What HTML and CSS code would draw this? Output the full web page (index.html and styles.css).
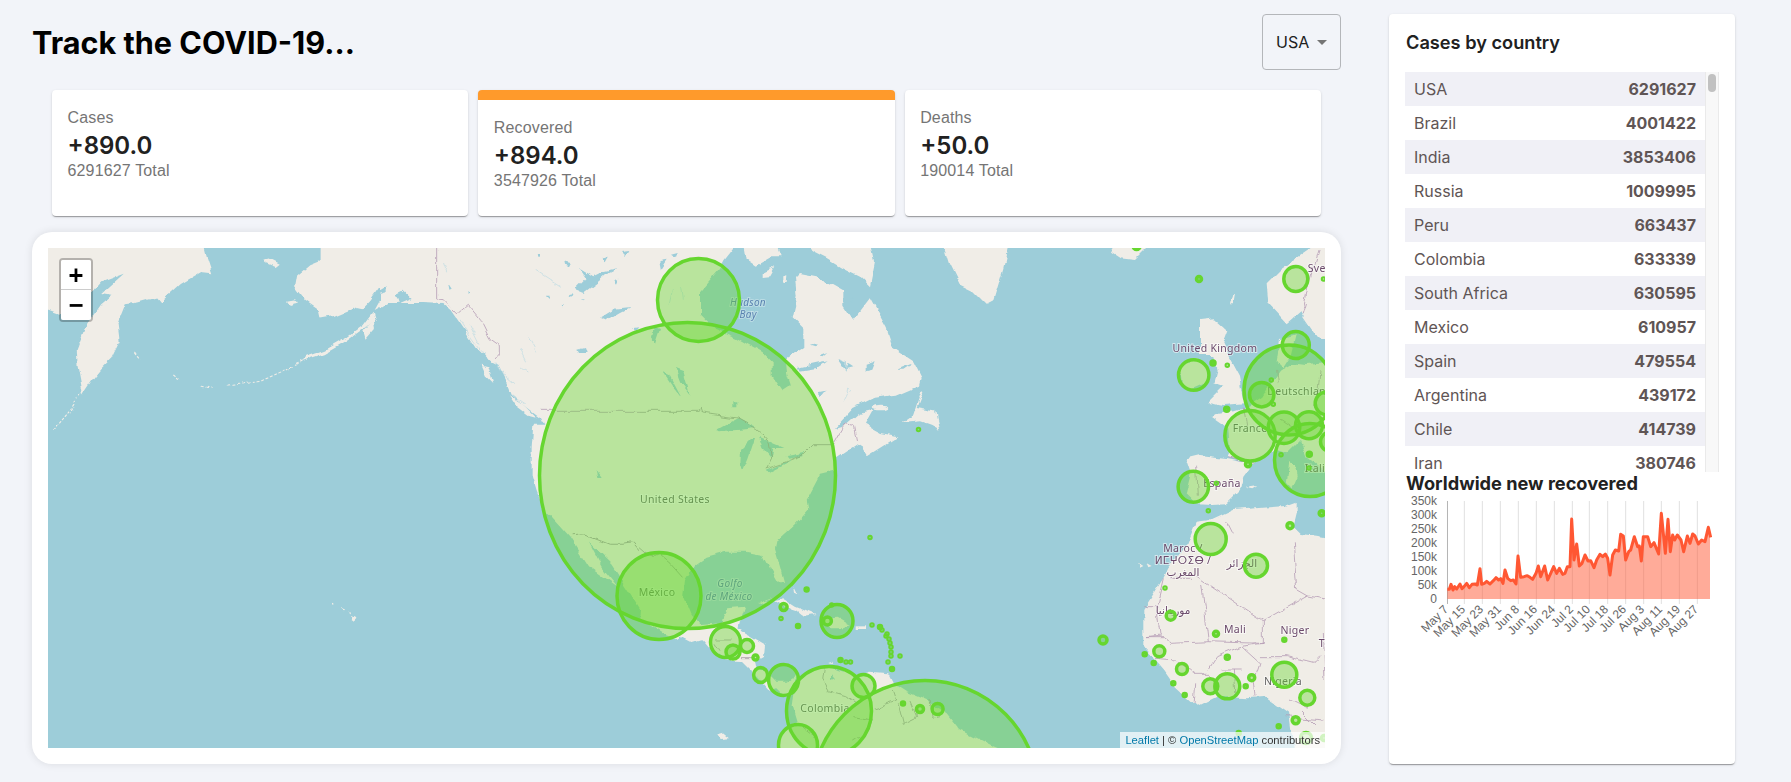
FILE: index.html
```html
<!DOCTYPE html>
<html lang="en">
<head>
<meta charset="utf-8">
<title>Track the COVID-19...</title>
<link rel="stylesheet" href="styles.css">
</head>
<body>
<div class="page">
  <main class="main">
    <header class="top">
      <h1 class="title">Track the COVID-19...</h1>
      <div class="select"><span>USA</span><i class="caret"></i></div>
    </header>
    <section class="stats">
      <article class="stat">
        <div class="stat-label">Cases</div>
        <div class="stat-value">+890.0</div>
        <div class="stat-total">6291627 Total</div>
      </article>
      <article class="stat stat-active">
        <div class="stat-label">Recovered</div>
        <div class="stat-value">+894.0</div>
        <div class="stat-total">3547926 Total</div>
      </article>
      <article class="stat">
        <div class="stat-label">Deaths</div>
        <div class="stat-value">+50.0</div>
        <div class="stat-total">190014 Total</div>
      </article>
    </section>
    <section class="map-card">
      <div class="map">
        <svg class="map-svg" viewBox="48 248 1277 500" width="1277" height="500">
          <defs>
            <filter id="rough" filterUnits="userSpaceOnUse" x="20" y="220" width="1340" height="560">
              <feTurbulence type="fractalNoise" baseFrequency=".06" numOctaves="4" seed="7" result="n"/>
              <feDisplacementMap in="SourceGraphic" in2="n" scale="7" xChannelSelector="R" yChannelSelector="G"/>
              <feGaussianBlur stdDeviation=".35"/>
            </filter>
          </defs>
          <rect class="water" x="48" y="248" width="1277" height="500"/>
          <g filter="url(#rough)">
          <!-- Siberia, Alaska, Pacific -->
          <g transform="translate(40 240) scale(.40816 .33807)">
            <path class="land" d="M0,-20L395,-20 410,55 422,98 395,95 345,130 295,185 285,170 240,185 210,190 190,250 195,300 175,350 150,380 130,410 105,455 92,370 90,325 110,260 150,190 175,165 150,160 205,100 150,125 125,160 100,200 45,218 0,198Z"/>
            <path class="land" d="M690,-20L690,60 660,75 630,105 625,140 650,180 680,205 685,232 720,225 770,200 790,205 810,180 830,145 850,145 820,210 880,170 940,180 1000,185 1000,-20Z"/>
            <path class="land" d="M815,215L790,255 750,290 700,325 650,345 640,358 700,335 750,300 790,265 820,235Z"/>
            <path class="land" d="M605,180L625,175 632,185 612,192Z"/>
            <path class="land" d="M545,58L560,55 585,70 575,80 550,68Z"/>
            <path class="land" d="M790,270L815,235 818,260 795,292Z"/>
            <path class="isle" d="M640,358L600,385 540,418 500,425 455,433M395,430L420,435M325,400L340,415M232,335L242,350M100,455L70,510 35,560"/>
            <path class="land" d="M1225,740L1240,800 1300,880 1345,965 1415,1025 1375,965 1345,895 1400,960 1470,1090 1468,1120 1535,1170 1568,1180 1568,700 1225,700Z"/>
            <path class="land" d="M710,1075L716,1073 716,1080ZM735,1085L745,1090 740,1095ZM755,1095L762,1103 760,1108ZM765,1112L778,1120 770,1130 764,1125Z"/>
          </g>
          <!-- West Canada -->
          <g transform="translate(380 248) scale(.33333)">
            <path class="land" d="M0,183L25,165 60,165 130,165 190,168 215,190 250,240 290,300 325,335 355,350 380,400 395,440 440,480 480,510 490,530 460,530 455,600 455,680 470,730 490,780 900,780 900,-30 0,-30Z"/>
            <path class="land" d="M390,445L430,470 470,510 450,505 410,475Z"/>
            <path class="land" d="M305,350L325,355 340,405 320,385Z"/>
            <path class="lake" d="M585,125L620,90 600,60 640,85 670,70 715,60 685,75 650,105 610,135ZM660,210L700,185 750,180 720,195 680,218ZM553,40L575,45 570,55 555,50ZM0,130L20,118 20,135 0,140ZM50,135L70,125 95,150 60,165ZM595,305L615,300 620,315 600,315ZM830,40L860,40 850,70 835,65ZM815,270L830,235 840,240 825,285Z"/>
            <path class="lake" d="M650,668L665,690 655,690ZM880,355L900,360 900,400 880,385ZM500,140L512,140 510,150ZM565,145L578,142 575,150ZM545,170L555,172 548,178ZM600,155L615,153 605,160ZM470,15L480,15 475,25ZM670,30L690,22 680,40ZM720,15L745,12 735,30ZM700,100L715,95 708,110ZM790,130L805,128 795,150ZM760,240L775,238 765,250ZM205,110L215,125 208,128ZM265,125L272,135 266,138Z"/>
            <path class="fjord" d="M240,215L275,270 320,330M270,230L300,290M345,340L375,385 405,410M395,440L440,470M445,265L470,310M420,360L445,375M470,70L540,115M190,40L200,70M420,300L440,340"/>
            <path class="border" d="M170,-30L170,153 190,155 232,200 265,172 300,215 330,275 358,295 358,315 345,330M480,490L900,490"/>
          </g>
          <!-- Mexico border -->
          <g transform="translate(40 240) scale(.40816 .33807)">
            <path class="border-gray" d="M1305,875L1335,872 1395,900 1430,900 1455,895 1480,930 1500,945 1520,930 1540,960 1568,1000"/>
          </g>
          <!-- East Canada & US -->
          <g transform="translate(640 248) scale(.33333)">
            <path class="land" d="M0,-30L305,-30 250,40 240,60 180,130 180,200 220,240 290,270 370,315 395,340 395,385 425,430 455,410 445,380 440,330 490,300 490,240 455,205 470,140 465,90 480,75 530,85 610,130 610,170 640,215 690,150 740,240 760,300 820,340 845,390 840,410 770,440 700,450 640,480 585,540 620,530 660,495 700,485 675,530 720,555 775,565 680,625 665,600 650,590 590,630 585,670 540,680 500,756 500,780 0,780Z"/>
            <path class="land" d="M785,525L820,500 845,425 850,430 830,480 885,490 898,545 870,530 840,520Z"/>
            <ellipse class="land" cx="720" cy="477" rx="25" ry="7"/>
            <path class="land" d="M465,-30L690,-30 705,40 690,115 660,85 610,60 560,30 520,10Z"/>
            <path class="land" d="M310,-30L400,-30 422,25 395,25 350,50 320,30Z"/>
            <path class="land" d="M365,75L400,58 385,85 365,87Z"/>
            <path class="land" d="M430,85L442,82 440,105 430,105Z"/>
            <path class="land" d="M905,-30L1110,-30 1090,60 1060,160 1040,170 1000,130 960,110 930,50Z"/>
            <path class="lake" d="M225,545L290,510 350,540 300,545 240,550ZM300,600L330,570 345,570 325,630 310,665 298,650ZM360,570L430,600 400,600 395,630 370,600ZM380,665L440,640 450,640 390,670ZM440,625L490,615 490,625 445,632ZM105,360L130,370 150,440 120,400ZM280,460L292,460 292,478 280,478ZM70,375L90,385 125,450 100,420ZM640,355L625,345 620,360ZM470,360L560,340 530,360 480,368ZM680,350L710,340 700,365 680,370ZM770,365L820,345 790,365ZM595,330L620,340 620,365ZM510,290L530,285 525,295ZM635,145L640,160 628,155ZM440,295L455,270 450,298ZM540,325L565,315 550,328ZM55,40L80,35 60,65ZM90,20L110,15 105,30ZM535,430L555,425 535,450ZM45,235L60,240 45,285 35,270Z"/>
            <path class="fjord" d="M100,130L90,175M125,120L130,155M620,420L632,430 618,435 620,420M610,460L620,440"/>
            <path class="border-gray" d="M0,490L175,490 180,480 185,495 290,510 350,545 385,575 395,630 380,660 440,640 490,620 520,590 580,590"/>
            <path class="border" d="M580,590L600,555 615,530 640,535 650,585"/>
          </g>
          <!-- Gulf, Central & South America -->
          <g transform="translate(640 500) scale(.33333)">
            <path class="land" d="M0,0L500,0 505,30 470,70 410,125 405,150 420,200 432,245 415,248 390,205 370,165 320,155 255,155 200,170 165,195 135,240 130,285 155,345 180,375 245,370 250,345 262,325 315,320 300,365 295,388 375,435 372,465 345,480 350,505 395,530 410,545 440,545 470,525 460,545 455,575 430,580 415,565 385,570 340,520 300,480 255,478 215,450 185,415 150,425 115,407 80,395 40,375 0,345Z"/>
            <path class="land" d="M460,575L480,545 520,510 560,495 590,510 625,520 640,530 690,515 745,520 760,550 800,575 860,600 920,640 960,690 1050,735 1190,790 410,790 415,720 440,680 470,670 455,620Z"/>
            <path class="land" d="M405,300L430,295 470,320 530,345 495,350 470,330 440,320Z"/>
            <path class="land" d="M355,310L400,293 365,312Z"/>
            <path class="land" d="M540,355L590,350 632,375 610,385 570,385Z"/>
            <path class="land" d="M650,376L678,376 678,384 650,384Z"/>
            <path class="land" d="M463,255L475,280 465,275ZM565,490L580,485 582,492ZM235,700L250,695 270,712 245,714Z"/>
            <path class="lake" d="M570,520L582,535 570,540Z"/>
            <path class="border-gray" d="M0,140L40,175 60,165 90,190 130,235M225,420L275,420M225,430L240,455M300,470L345,470M550,505L545,540 565,575 620,590 650,610M700,625L770,600 760,570M775,610L790,670 830,650 810,600M870,600L880,655 900,650M640,650L700,660 690,690 640,720M490,680L530,710"/>
          </g>
          <!-- Europe -->
          <g transform="translate(1100 240) scale(.33333)">
            <path class="land" d="M110,-20L150,15 105,60 60,55 30,35 60,-20Z"/>
            <path class="land" d="M730,-20L655,-20 635,24 590,55 540,90 500,130 505,190 560,250 600,215 612,235 650,290 730,310Z"/>
            <path class="land" d="M300,240L345,235 385,270 370,310 385,345 420,410 435,490 370,495 325,485 370,440 340,430 350,390 340,345 300,345Z"/>
            <path class="land" d="M240,380L290,360 320,375 325,425 270,450 245,430Z"/>
            <path class="land" d="M540,300L590,285 575,345 550,385 530,365Z"/>
            <path class="land" d="M730,365L620,375 580,370 555,385 540,395 515,430 490,470 445,500 405,510 345,520 335,530 385,565 390,640 385,650 465,668 530,630 560,640 600,600 620,650 730,740Z"/>
            <path class="land" d="M565,665L585,675 590,710 575,745 558,725Z"/>
            <path class="land" d="M260,655L300,645 385,655 460,670 430,710 420,750 380,790 330,792 290,790 260,760 275,700Z"/>
            <path class="land" d="M395,170L405,160 400,190 390,190ZM440,740L475,735 460,745Z"/>
            <path class="border" d="M620,190L610,225M655,30L625,130 610,210M290,680L295,770M430,500L440,560M530,390L535,430M385,650L460,670M660,390L650,500M540,540L600,580"/>
          </g>
          <!-- Africa -->
          <g transform="translate(1100 500) scale(.33333)">
            <path class="land" d="M290,65L330,60 395,30 470,25 555,18 590,5 590,40 580,80 605,105 650,110 730,125 730,790 590,790 570,640 500,590 440,595 350,590 290,620 225,560 190,510 130,440 130,330 190,235 205,205 265,130Z"/>
            <path class="land" d="M115,185L130,195 120,200ZM140,190L155,198 145,202Z"/>
            <path class="border" d="M130,320L170,320 190,235M170,320L180,405 140,410M305,255L325,425 215,430 190,410 140,410M270,215L470,350 490,362 625,285 680,295M490,362L490,430 325,425M580,130L590,265 625,285M210,235L270,235M400,100L380,60M490,430L420,440 350,470 325,510M165,475L230,480 280,520 330,520M365,510L425,510M480,470L560,470 640,490 660,470M425,440L480,490 460,550 465,590M290,550L285,615M400,510L405,590M560,650L670,660M570,600L620,625M670,400L675,540M600,630L650,680"/>
          </g>
          </g>
          <!-- Map labels -->
          <g class="labels">
            <text class="lb lb-water" x="748" y="306">Hudson</text>
            <text class="lb lb-water" x="748" y="318">Bay</text>
            <text class="lb" x="675" y="503">United States</text>
            <text class="lb" x="657" y="596">México</text>
            <text class="lb lb-water lb-gulf" x="730" y="587">Golfo</text>
            <text class="lb lb-water lb-gulf" x="729" y="600">de México</text>
            <text class="lb" x="825" y="712">Colombia</text>
            <text class="lb lb-pur" x="1215" y="352">United Kingdom</text>
            <text class="lb lb-pur" x="1222" y="487">España</text>
            <text class="lb" x="1250" y="432">France</text>
            <text class="lb" x="1300" y="395">Deutschland</text>
            <text class="lb" x="1318" y="472">Italia</text>
            <text class="lb lb-pur" x="1327" y="272">Sverige</text>
            <text class="lb lb-pur" x="1183" y="552">Maroc /</text>
            <text class="lb lb-pur" x="1183" y="564">ⵍⵎⵖⵔⵉⴱ /</text>
            <text class="lb lb-pur" x="1183" y="576">المغرب</text>
            <text class="lb lb-pur" x="1242" y="567">الجزائر</text>
            <text class="lb lb-pur" x="1173" y="614">موريتانيا</text>
            <text class="lb lb-pur" x="1235" y="633">Mali</text>
            <text class="lb lb-pur" x="1295" y="634">Niger</text>
            <text class="lb lb-pur" x="1334" y="647">Tchad</text>
            <text class="lb" x="1283" y="685">Nigeria</text>
          </g>
          <!-- Circles -->
          <g class="circles">
            <ellipse cx="687.5" cy="475.5" rx="148" ry="153"/>
            <ellipse cx="659" cy="596" rx="42" ry="43.5"/>
            <ellipse cx="698.5" cy="300" rx="41" ry="41.5"/>
            <ellipse cx="925" cy="796" rx="114" ry="115.500"/>
            <ellipse cx="829" cy="711" rx="42.5" ry="44.5"/>
            <ellipse cx="798" cy="745" rx="19.5" ry="20.5"/>
            <ellipse cx="863.5" cy="686" rx="11.5" ry="11.5"/>
            <ellipse cx="725.5" cy="642" rx="15" ry="15.5"/>
            <ellipse cx="733" cy="652" rx="7" ry="7"/>
            <ellipse cx="747" cy="646" rx="6.5" ry="6.5"/>
            <ellipse cx="755.5" cy="657.5" rx="2.5" ry="2.5"/>
            <ellipse cx="760.6" cy="675" rx="7" ry="7.5"/>
            <ellipse cx="783.6" cy="680" rx="15" ry="15.5"/>
            <ellipse cx="783.6" cy="607" rx="3.5" ry="3.5"/>
            <ellipse cx="806.6" cy="589.6" rx="1.5" ry="1.5"/>
            <ellipse cx="781" cy="618.6" rx="1" ry="1"/>
            <ellipse cx="798" cy="626" rx="1.5" ry="1.5"/>
            <ellipse cx="837" cy="621" rx="16" ry="16.5"/>
            <ellipse cx="827.4" cy="621" rx="4" ry="4"/>
            <ellipse cx="831.7" cy="605" rx="1" ry="1"/>
            <ellipse cx="872" cy="625" rx="1" ry="1"/>
            <ellipse cx="880" cy="627" rx="1.5" ry="1.5"/>
            <ellipse cx="882" cy="630" rx="1" ry="1"/>
            <ellipse cx="887" cy="634" rx="1" ry="1"/>
            <ellipse cx="886" cy="636" rx="1" ry="1"/>
            <ellipse cx="889" cy="639" rx="1" ry="1"/>
            <ellipse cx="890" cy="643" rx="1" ry="1"/>
            <ellipse cx="891" cy="647" rx="1" ry="1"/>
            <ellipse cx="891" cy="652" rx="1" ry="1"/>
            <ellipse cx="891" cy="656" rx="1" ry="1"/>
            <ellipse cx="900" cy="656" rx="1" ry="1"/>
            <ellipse cx="888" cy="662" rx="1" ry="1"/>
            <ellipse cx="892" cy="669" rx="1.5" ry="1.5"/>
            <ellipse cx="840.5" cy="660" rx="1.5" ry="1.5"/>
            <ellipse cx="846" cy="662" rx="1" ry="1"/>
            <ellipse cx="850.5" cy="662" rx="1" ry="1"/>
            <ellipse cx="903" cy="703.5" rx="1.5" ry="1.5"/>
            <ellipse cx="920" cy="709" rx="3.5" ry="3.5"/>
            <ellipse cx="937.6" cy="709" rx="5.5" ry="5.5"/>
            <ellipse cx="918.5" cy="429.6" rx="1" ry="1"/>
            <ellipse cx="870" cy="537.5" rx="1" ry="1"/>
            <ellipse cx="1103" cy="640" rx="4" ry="4"/>
            <ellipse cx="1136.6" cy="246" rx="3.5" ry="3.5"/>
            <ellipse cx="1199" cy="279" rx="2.5" ry="2.5"/>
            <ellipse cx="1295.8" cy="279" rx="12" ry="12.5"/>
            <ellipse cx="1323.5" cy="279" rx="1" ry="1"/>
            <ellipse cx="1295.8" cy="345" rx="13.5" ry="13.5"/>
            <ellipse cx="1193.7" cy="375" rx="15.2" ry="15.2"/>
            <ellipse cx="1213" cy="363" rx="2" ry="2"/>
            <ellipse cx="1227.3" cy="365.3" rx="1" ry="1"/>
            <ellipse cx="1226.7" cy="409.3" rx="2" ry="2"/>
            <ellipse cx="1271.3" cy="380" rx="1" ry="1"/>
            <ellipse cx="1273.3" cy="404.3" rx="1" ry="1"/>
            <ellipse cx="1289" cy="390" rx="45" ry="45"/>
            <ellipse cx="1261.7" cy="394.7" rx="12.2" ry="12.2"/>
            <ellipse cx="1250" cy="435.7" rx="25.2" ry="25.2"/>
            <ellipse cx="1284" cy="427.7" rx="15.8" ry="15.8"/>
            <ellipse cx="1309" cy="425.3" rx="13.5" ry="13.5"/>
            <ellipse cx="1310" cy="460" rx="35.5" ry="36.5"/>
            <ellipse cx="1326.7" cy="403.3" rx="11.5" ry="11.5"/>
            <ellipse cx="1330" cy="441.7" rx="9.5" ry="9.5"/>
            <ellipse cx="1281" cy="454.7" rx="1" ry="1"/>
            <ellipse cx="1309.3" cy="454.3" rx="2" ry="2"/>
            <ellipse cx="1309" cy="468" rx="1" ry="1"/>
            <ellipse cx="1248" cy="464.3" rx="2.5" ry="2.5"/>
            <ellipse cx="1193.3" cy="486.7" rx="15.2" ry="15.5"/>
            <ellipse cx="1216.3" cy="483.3" rx="1" ry="1"/>
            <ellipse cx="1208.3" cy="510.7" rx="1" ry="1"/>
            <ellipse cx="1321.7" cy="513.3" rx="2.5" ry="2.5"/>
            <ellipse cx="1290" cy="525.7" rx="3" ry="3"/>
            <ellipse cx="1210.7" cy="539" rx="15.5" ry="15.5"/>
            <ellipse cx="1256" cy="565.7" rx="11.5" ry="11.5"/>
            <ellipse cx="1165" cy="588" rx="1" ry="1"/>
            <ellipse cx="1170.7" cy="615.7" rx="4.5" ry="4.5"/>
            <ellipse cx="1216" cy="633.7" rx="2.5" ry="2.5"/>
            <ellipse cx="1284.3" cy="639.7" rx="1.5" ry="1.5"/>
            <ellipse cx="1159.3" cy="651.3" rx="5.5" ry="5.5"/>
            <ellipse cx="1144.7" cy="654.3" rx="1.5" ry="1.5"/>
            <ellipse cx="1153.7" cy="663" rx="1.5" ry="1.5"/>
            <ellipse cx="1227.3" cy="657.3" rx="2" ry="2"/>
            <ellipse cx="1182" cy="669" rx="5.5" ry="5.5"/>
            <ellipse cx="1251.7" cy="677.7" rx="3" ry="3"/>
            <ellipse cx="1284.3" cy="674.7" rx="12.5" ry="12.5"/>
            <ellipse cx="1173.3" cy="683.3" rx="1.5" ry="1.5"/>
            <ellipse cx="1210.3" cy="686.3" rx="7.5" ry="7.5"/>
            <ellipse cx="1227.3" cy="686.3" rx="12.5" ry="12.5"/>
            <ellipse cx="1245.7" cy="686.3" rx="1.5" ry="1.5"/>
            <ellipse cx="1184.7" cy="695" rx="1.5" ry="1.5"/>
            <ellipse cx="1307.3" cy="697.7" rx="7.5" ry="7.5"/>
            <ellipse cx="1295.7" cy="720.3" rx="3.5" ry="3.5"/>
            <ellipse cx="1278.7" cy="726.3" rx="1.5" ry="1.5"/>
            <ellipse cx="1238.7" cy="733" rx="1.5" ry="1.5"/>
            <ellipse cx="1306" cy="738" rx="5.5" ry="5.5"/>
            <ellipse cx="1324" cy="738" rx="2.5" ry="2.5"/>
          </g>
        </svg>
        <div class="zoom">
          <div class="zoom-btn">+</div>
          <div class="zoom-btn">−</div>
        </div>
        <div class="attrib"><a class="attrib-link">Leaflet</a> | © <a class="attrib-link">OpenStreetMap</a> contributors</div>
      </div>
    </section>
  </main>
  <aside class="side">
    <h2 class="side-title">Cases by country</h2>
    <div class="list-wrap">
      <ul class="list">
        <li class="row"><span>USA</span><b>6291627</b></li>
        <li class="row"><span>Brazil</span><b>4001422</b></li>
        <li class="row"><span>India</span><b>3853406</b></li>
        <li class="row"><span>Russia</span><b>1009995</b></li>
        <li class="row"><span>Peru</span><b>663437</b></li>
        <li class="row"><span>Colombia</span><b>633339</b></li>
        <li class="row"><span>South Africa</span><b>630595</b></li>
        <li class="row"><span>Mexico</span><b>610957</b></li>
        <li class="row"><span>Spain</span><b>479554</b></li>
        <li class="row"><span>Argentina</span><b>439172</b></li>
        <li class="row"><span>Chile</span><b>414739</b></li>
        <li class="row"><span>Iran</span><b>380746</b></li>
      </ul>
      <div class="track"><div class="thumb"></div></div>
    </div>
    <h3 class="chart-title">Worldwide new recovered</h3>
    <svg class="chart" viewBox="1390 494 340 170" width="340" height="170">
      <g class="ylab">
        <text x="1437" y="505">350k</text>
        <text x="1437" y="519">300k</text>
        <text x="1437" y="533">250k</text>
        <text x="1437" y="547">200k</text>
        <text x="1437" y="561">150k</text>
        <text x="1437" y="575">100k</text>
        <text x="1437" y="589">50k</text>
        <text x="1437" y="603">0</text>
      </g>
      <g transform="translate(1380 400) scale(.33333)">
        <path class="grid" d="M253,303V612M307,303V612M361,303V612M415,303V612M469,303V612M523,303V612M577,303V612M628,303V612M683,303V612M737,303V612M791,303V612M844,303V612M898,303V612M952,303V612"/>
        <path class="axis" d="M202.500,303V612"/>
        <path class="area" d="M202,597L202,568 208,568 213,553 219,570 224,560 230,567 236,558 240,552 246,566 252,560 260,550 268,563 276,553 285,552 292,555 300,506 305,553 313,550 320,544 330,552 340,542 348,533 356,540 362,536 369,550 375,510 383,535 392,542 400,540 408,552 414,468 422,532 432,530 442,527 450,532 458,538 468,520 475,498 482,530 494,498 503,540 512,520 521,500 530,520 538,505 548,523 555,520 562,500 570,500 575,357 582,480 590,432 598,498 606,490 615,465 624,483 632,482 642,503 650,480 660,463 668,470 676,462 683,475 690,525 698,465 706,450 716,453 722,403 730,408 737,480 746,455 752,450 763,410 773,440 778,438 784,483 790,410 803,410 812,440 822,428 836,462 844,340 856,460 864,358 871,455 878,405 884,420 892,405 903,420 911,455 922,408 930,430 938,402 945,408 955,432 965,420 975,425 985,382 990,410 990,597Z"/>
        <path class="line" d="M202,568L208,568 213,553 219,570 224,560 230,567 236,558 240,552 246,566 252,560 260,550 268,563 276,553 285,552 292,555 300,506 305,553 313,550 320,544 330,552 340,542 348,533 356,540 362,536 369,550 375,510 383,535 392,542 400,540 408,552 414,468 422,532 432,530 442,527 450,532 458,538 468,520 475,498 482,530 494,498 503,540 512,520 521,500 530,520 538,505 548,523 555,520 562,500 570,500 575,357 582,480 590,432 598,498 606,490 615,465 624,483 632,482 642,503 650,480 660,463 668,470 676,462 683,475 690,525 698,465 706,450 716,453 722,403 730,408 737,480 746,455 752,450 763,410 773,440 778,438 784,483 790,410 803,410 812,440 822,428 836,462 844,340 856,460 864,358 871,455 878,405 884,420 892,405 903,420 911,455 922,408 930,430 938,402 945,408 955,432 965,420 975,425 985,382 992,412"/>
      </g>
      <g class="xlab">
        <text transform="translate(1449 610) rotate(-45)">May 7</text>
        <text transform="translate(1466 610) rotate(-45)">May 15</text>
        <text transform="translate(1484 610) rotate(-45)">May 23</text>
        <text transform="translate(1502 610) rotate(-45)">May 31</text>
        <text transform="translate(1520 610) rotate(-45)">Jun 8</text>
        <text transform="translate(1538 610) rotate(-45)">Jun 16</text>
        <text transform="translate(1556 610) rotate(-45)">Jun 24</text>
        <text transform="translate(1574 610) rotate(-45)">Jul 2</text>
        <text transform="translate(1591 610) rotate(-45)">Jul 10</text>
        <text transform="translate(1609 610) rotate(-45)">Jul 18</text>
        <text transform="translate(1627 610) rotate(-45)">Jul 26</text>
        <text transform="translate(1645 610) rotate(-45)">Aug 3</text>
        <text transform="translate(1663 610) rotate(-45)">Aug 11</text>
        <text transform="translate(1681 610) rotate(-45)">Aug 19</text>
        <text transform="translate(1699 610) rotate(-45)">Aug 27</text>
      </g>
    </svg>
  </aside>
</div>
</body>
</html>
```
FILE: styles.css
```css
* { box-sizing: border-box; }
html, body { margin: 0; padding: 0; }
body {
  background: #f2f4f9;
  font-family: Inter, "Liberation Sans", sans-serif;
  color: #212121;
  height: 782px;
  overflow: hidden;
}
.page {
  display: flex;
  gap: 48px;
  padding: 14px 56px 18px 32px;
  height: 782px;
}
.main {
  width: 1309px;
  display: flex;
  flex-direction: column;
}
.top {
  display: flex;
  justify-content: space-between;
  align-items: center;
  height: 56px;
}
.title {
  margin: 2px 0 0;
  font-size: 30.6px;
  font-weight: 700;
  color: #000;
  line-height: 56px;
}
.select {
  width: 79px;
  height: 56px;
  border: 1px solid #b4b6ba;
  border-radius: 4px;
  display: flex;
  align-items: center;
  padding-left: 13px;
  font-size: 16px;
  color: #212121;
  gap: 8px;
}
.caret {
  width: 0;
  height: 0;
  border-left: 5px solid transparent;
  border-right: 5px solid transparent;
  border-top: 5px solid #757575;
  margin-top: 1px;
}
.stats {
  display: flex;
  gap: 10px;
  margin: 20px 20px 0 20px;
  height: 126px;
}
.stat {
  flex: 1;
  background: #fff;
  border-radius: 4px;
  padding: 16px 16px 0 15.500px;
  box-shadow: 0 2px 1px -1px rgba(0,0,0,.2), 0 1px 1px 0 rgba(0,0,0,.14), 0 1px 3px 0 rgba(0,0,0,.12);
}
.stat-active {
  border-top: 10px solid #ff9a2b;
}
.stat-label, .stat-total {
  font-family: "Liberation Sans", Arial, sans-serif;
  font-size: 16px;
  line-height: 24px;
  letter-spacing: .15px;
  color: #757575;
}
.stat-value {
  font-size: 24px;
  font-weight: 600;
  line-height: 28px;
  margin-top: 2px;
  color: #212121;
}
.stat-total { margin-top: -1px; }
.map-card {
  margin-top: 16px;
  height: 532px;
  background: #fff;
  border-radius: 20px;
  padding: 16px;
  box-shadow: 0 0 8px rgba(0,0,0,.1);
}
.map {
  position: relative;
  width: 1277px;
  height: 500px;
  overflow: hidden;
}
.map-svg { display: block; }
.water { fill: #9dcdd9; }
.land { fill: #f0ede7; }
.lake { fill: #9dcdd9; }
.isle { fill: none; stroke: #f0ede7; stroke-width: 3; stroke-linecap: round; stroke-dasharray: 5 7; }
.fjord { fill: none; stroke: #bcdbe3; stroke-width: 2; }
.border { fill: none; stroke: #b59cb5; stroke-width: 2.4; }
.border-gray { fill: none; stroke: #a49aa3; stroke-width: 2.4; }
.circles ellipse {
  fill: #66d62f;
  fill-opacity: .4;
  stroke: #66d62f;
  stroke-width: 3.5;
}
.lb {
  font-family: "Noto Sans", "DejaVu Sans", sans-serif;
  font-size: 10.5px;
  letter-spacing: .3px;
  text-anchor: middle;
  fill: #666;
  stroke: rgba(255,255,255,.55);
  stroke-width: 2px;
  paint-order: stroke;
}
.lb-pur { fill: #6b4a6b; }
.lb-water { fill: #5a83b0; font-style: italic; font-size: 10px; stroke: rgba(255,255,255,.3); }
.lb-gulf { fill: #5a83b0; }
.zoom {
  position: absolute;
  left: 11px;
  top: 10px;
  width: 34px;
  border: 2px solid rgba(0,0,0,.25);
  border-radius: 4px;
  background-clip: padding-box;
}
.zoom-btn {
  width: 30px;
  height: 30px;
  background: #fff;
  text-align: center;
  font: 700 24px/30px "DejaVu Sans Mono", "Liberation Mono", monospace;
  color: #000;
}
.zoom-btn:first-child {
  border-bottom: 1px solid #ccc;
  border-radius: 2px 2px 0 0;
}
.zoom-btn:last-child { border-radius: 0 0 2px 2px; }
.attrib {
  position: absolute;
  right: 0;
  bottom: 0;
  height: 16px;
  padding: 0 5px;
  background: rgba(255,255,255,.7);
  font: 11.2px/16px "Liberation Sans", Arial, sans-serif;
  color: #333;
}
.attrib-link { color: #0078a8; }
.side {
  width: 346px;
  height: 750px;
  background: #fff;
  border-radius: 4px;
  padding: 0 16px;
  box-shadow: 0 2px 1px -1px rgba(0,0,0,.2), 0 1px 1px 0 rgba(0,0,0,.14), 0 1px 3px 0 rgba(0,0,0,.12);
}
.side-title {
  margin: 0;
  padding: 17px 0 0 1px;
  height: 58px;
  font-size: 18.2px;
  font-weight: 600;
  line-height: 22px;
  color: #212121;
}
.list-wrap {
  display: flex;
  height: 400px;
  overflow: hidden;
}
.list {
  list-style: none;
  margin: 0;
  padding: 0;
  width: 300px;
}
.row {
  display: flex;
  justify-content: space-between;
  align-items: center;
  height: 34px;
  padding: 0 9px 0 9px;
  font-size: 16px;
  color: #5f5555;
}
.row:nth-child(odd) { background: #f0f0f6; }
.row b { font-weight: 700; }
.track {
  width: 14px;
  background: #f8f8f8;
  border-left: 1px solid #eaeaea;
  border-right: 1px solid #eaeaea;
  padding: 2px 2px 0 2px;
}
.thumb {
  height: 18px;
  background: #c1c1c1;
  border-radius: 4px;
}
.chart-title {
  margin: 0;
  height: 22px;
  padding: 0 0 0 1px;
  font-size: 18.2px;
  font-weight: 700;
  line-height: 22px;
  color: #212121;
}
.chart { display: block; margin: 0 -15px; }
.ylab text {
  font: 12px "Liberation Sans", Arial, sans-serif;
  fill: #666;
  text-anchor: end;
}
.xlab text {
  font: 12px "Liberation Sans", Arial, sans-serif;
  fill: #666;
  text-anchor: end;
}
.grid { stroke: #e0e0e0; stroke-width: 3; fill: none; }
.axis { stroke: #b5b5b5; stroke-width: 3; fill: none; }
.area { fill: rgba(255,87,51,.5); }
.line { fill: none; stroke: #ff5733; stroke-width: 9; stroke-linejoin: round; }
```
